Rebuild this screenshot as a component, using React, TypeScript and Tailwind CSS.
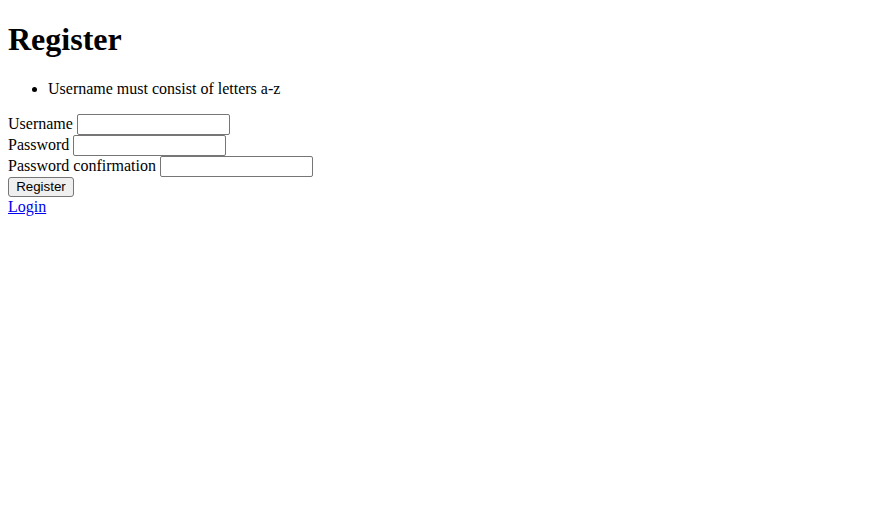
export default function App() {
  return (
    <div className="min-h-[520px] bg-white px-2 pt-2 font-['Liberation_Serif',serif] text-[16px] leading-[18px] text-black">
      <h1 className="mt-[13.44px] mb-[21.44px] text-[32px] leading-[37px] font-bold">Register</h1>
      <ul className="mb-4 list-disc pl-10">
        <li>Username must consist of letters a-z</li>
      </ul>
      <form className="flex flex-col items-start">
        <div className="flex h-[21px] items-center">
          <label htmlFor="username">Username</label>
          <input
            id="username"
            className="ml-[4px] h-[21px] w-[153px] rounded-[2px] border border-[#767676] bg-white px-[2px]"
          />
        </div>
        <div className="flex h-[21px] items-center">
          <label htmlFor="password">Password</label>
          <input
            id="password"
            type="password"
            className="ml-[4px] h-[21px] w-[153px] rounded-[2px] border border-[#767676] bg-white px-[2px]"
          />
        </div>
        <div className="flex h-[21px] items-center">
          <label htmlFor="confirmation">Password confirmation</label>
          <input
            id="confirmation"
            type="password"
            className="ml-[4px] h-[21px] w-[153px] rounded-[2px] border border-[#767676] bg-white px-[2px]"
          />
        </div>
        <button
          type="button"
          className="mt-[0.5px] h-[20px] w-[66px] rounded-[3px] border border-[#767676] bg-[#efefef] font-['Liberation_Sans',sans-serif] text-[13.33px] leading-[16px]"
        >
          Register
        </button>
        <a href="#" className="text-[#0000ee] underline leading-[19px]">
          Login
        </a>
      </form>
    </div>
  );
}
